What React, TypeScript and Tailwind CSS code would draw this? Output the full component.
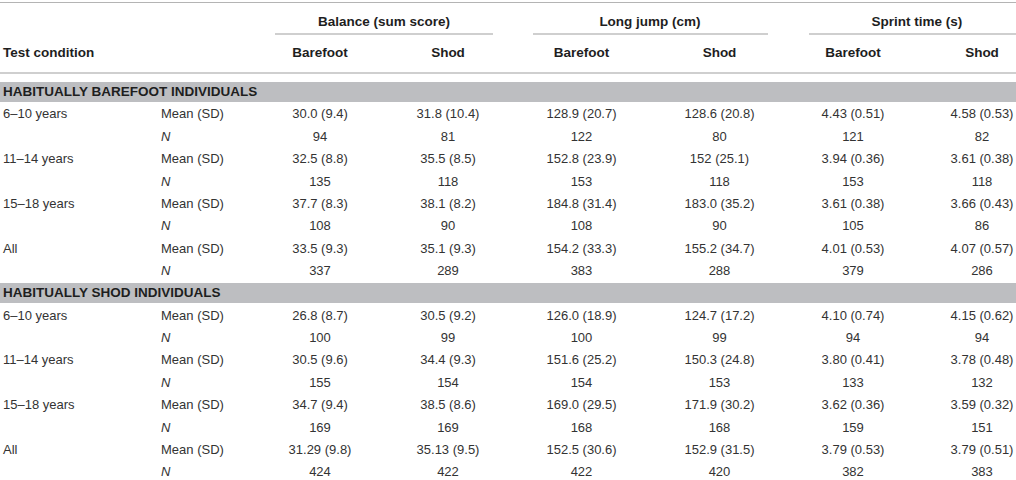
import React from 'react'

type Row = {
  group: string
  mean: [string, string, string, string, string, string]
  n: [string, string, string, string, string, string]
}

const barefoot: Row[] = [
  { group: '6–10 years', mean: ['30.0 (9.4)', '31.8 (10.4)', '128.9 (20.7)', '128.6 (20.8)', '4.43 (0.51)', '4.58 (0.53)'], n: ['94', '81', '122', '80', '121', '82'] },
  { group: '11–14 years', mean: ['32.5 (8.8)', '35.5 (8.5)', '152.8 (23.9)', '152 (25.1)', '3.94 (0.36)', '3.61 (0.38)'], n: ['135', '118', '153', '118', '153', '118'] },
  { group: '15–18 years', mean: ['37.7 (8.3)', '38.1 (8.2)', '184.8 (31.4)', '183.0 (35.2)', '3.61 (0.38)', '3.66 (0.43)'], n: ['108', '90', '108', '90', '105', '86'] },
  { group: 'All', mean: ['33.5 (9.3)', '35.1 (9.3)', '154.2 (33.3)', '155.2 (34.7)', '4.01 (0.53)', '4.07 (0.57)'], n: ['337', '289', '383', '288', '379', '286'] },
]

const shod: Row[] = [
  { group: '6–10 years', mean: ['26.8 (8.7)', '30.5 (9.2)', '126.0 (18.9)', '124.7 (17.2)', '4.10 (0.74)', '4.15 (0.62)'], n: ['100', '99', '100', '99', '94', '94'] },
  { group: '11–14 years', mean: ['30.5 (9.6)', '34.4 (9.3)', '151.6 (25.2)', '150.3 (24.8)', '3.80 (0.41)', '3.78 (0.48)'], n: ['155', '154', '154', '153', '133', '132'] },
  { group: '15–18 years', mean: ['34.7 (9.4)', '38.5 (8.6)', '169.0 (29.5)', '171.9 (30.2)', '3.62 (0.36)', '3.59 (0.32)'], n: ['169', '169', '168', '168', '159', '151'] },
  { group: 'All', mean: ['31.29 (9.8)', '35.13 (9.5)', '152.5 (30.6)', '152.9 (31.5)', '3.79 (0.53)', '3.79 (0.51)'], n: ['424', '422', '422', '420', '382', '383'] },
]

const cols = 'grid grid-cols-[157px_99px_128px_128px_139px_137px_130px_128px]'

const DataRows = ({ rows }: { rows: Row[] }) => (
  <>
    {rows.map((r) => (
      <React.Fragment key={r.group}>
        <div className={`${cols} h-[22.4px] items-center text-[13px] text-[#333]`}>
          <div className="pl-[3px]">{r.group}</div>
          <div className="pl-[4px]">Mean (SD)</div>
          {r.mean.map((v, i) => (
            <div key={i} className="text-center">{v}</div>
          ))}
        </div>
        <div className={`${cols} h-[22.4px] items-center text-[13px] text-[#333]`}>
          <div />
          <div className="pl-[4px] italic">N</div>
          {r.n.map((v, i) => (
            <div key={i} className="text-center">{v}</div>
          ))}
        </div>
      </React.Fragment>
    ))}
  </>
)

const Band = ({ label }: { label: string }) => (
  <div className="h-[20px] bg-[#bdbec1] flex items-center pl-[3px] text-[13.5px] font-bold text-[#1e1e1e]">
    {label}
  </div>
)

export default function App() {
  return (
    <div className="w-[1016px] h-[480px] overflow-hidden bg-white" style={{ fontFamily: '"Liberation Sans", Arial, sans-serif' }}>
      <div className="w-[1046px] pt-[2px]">
        <div className="border-t border-[#b4b4b4]" />
        {/* group headings */}
        <div className={`${cols} h-[32px] text-[13.5px] font-bold text-[#1e1e1e]`}>
          <div className="col-span-2" />
          <div className="col-span-2 flex flex-col justify-end">
            <div className="text-center pb-[1px]">Balance (sum score)</div>
            <div className="mx-[19px] h-[2px] bg-[#cfcfcf]" />
          </div>
          <div className="col-span-2 flex flex-col justify-end">
            <div className="text-center pb-[1px]">Long jump (cm)</div>
            <div className="ml-[21px] mr-[20px] h-[2px] bg-[#cfcfcf]" />
          </div>
          <div className="col-span-2 flex flex-col justify-end">
            <div className="text-center pb-[1px]">Sprint time (s)</div>
            <div className="ml-[21px] h-[2px] bg-[#cfcfcf]" />
          </div>
        </div>
        <div className={`${cols} h-[37px] items-center text-[13.5px] font-bold text-[#1e1e1e]`}>
          <div className="col-span-2 pl-[3px]">Test condition</div>
          <div className="text-center">Barefoot</div>
          <div className="text-center">Shod</div>
          <div className="text-center">Barefoot</div>
          <div className="text-center">Shod</div>
          <div className="text-center">Barefoot</div>
          <div className="text-center">Shod</div>
        </div>
        <div className="h-[2px] bg-[#cfcfcf]" />
        <div className="mt-[8px]">
          <Band label="HABITUALLY BAREFOOT INDIVIDUALS" />
        </div>
        <div className="mt-[1px]">
          <DataRows rows={barefoot} />
        </div>
        <div className="mt-[1px]">
          <Band label="HABITUALLY SHOD INDIVIDUALS" />
        </div>
        <div className="mt-[1px]">
          <DataRows rows={shod} />
        </div>
      </div>
    </div>
  )
}
